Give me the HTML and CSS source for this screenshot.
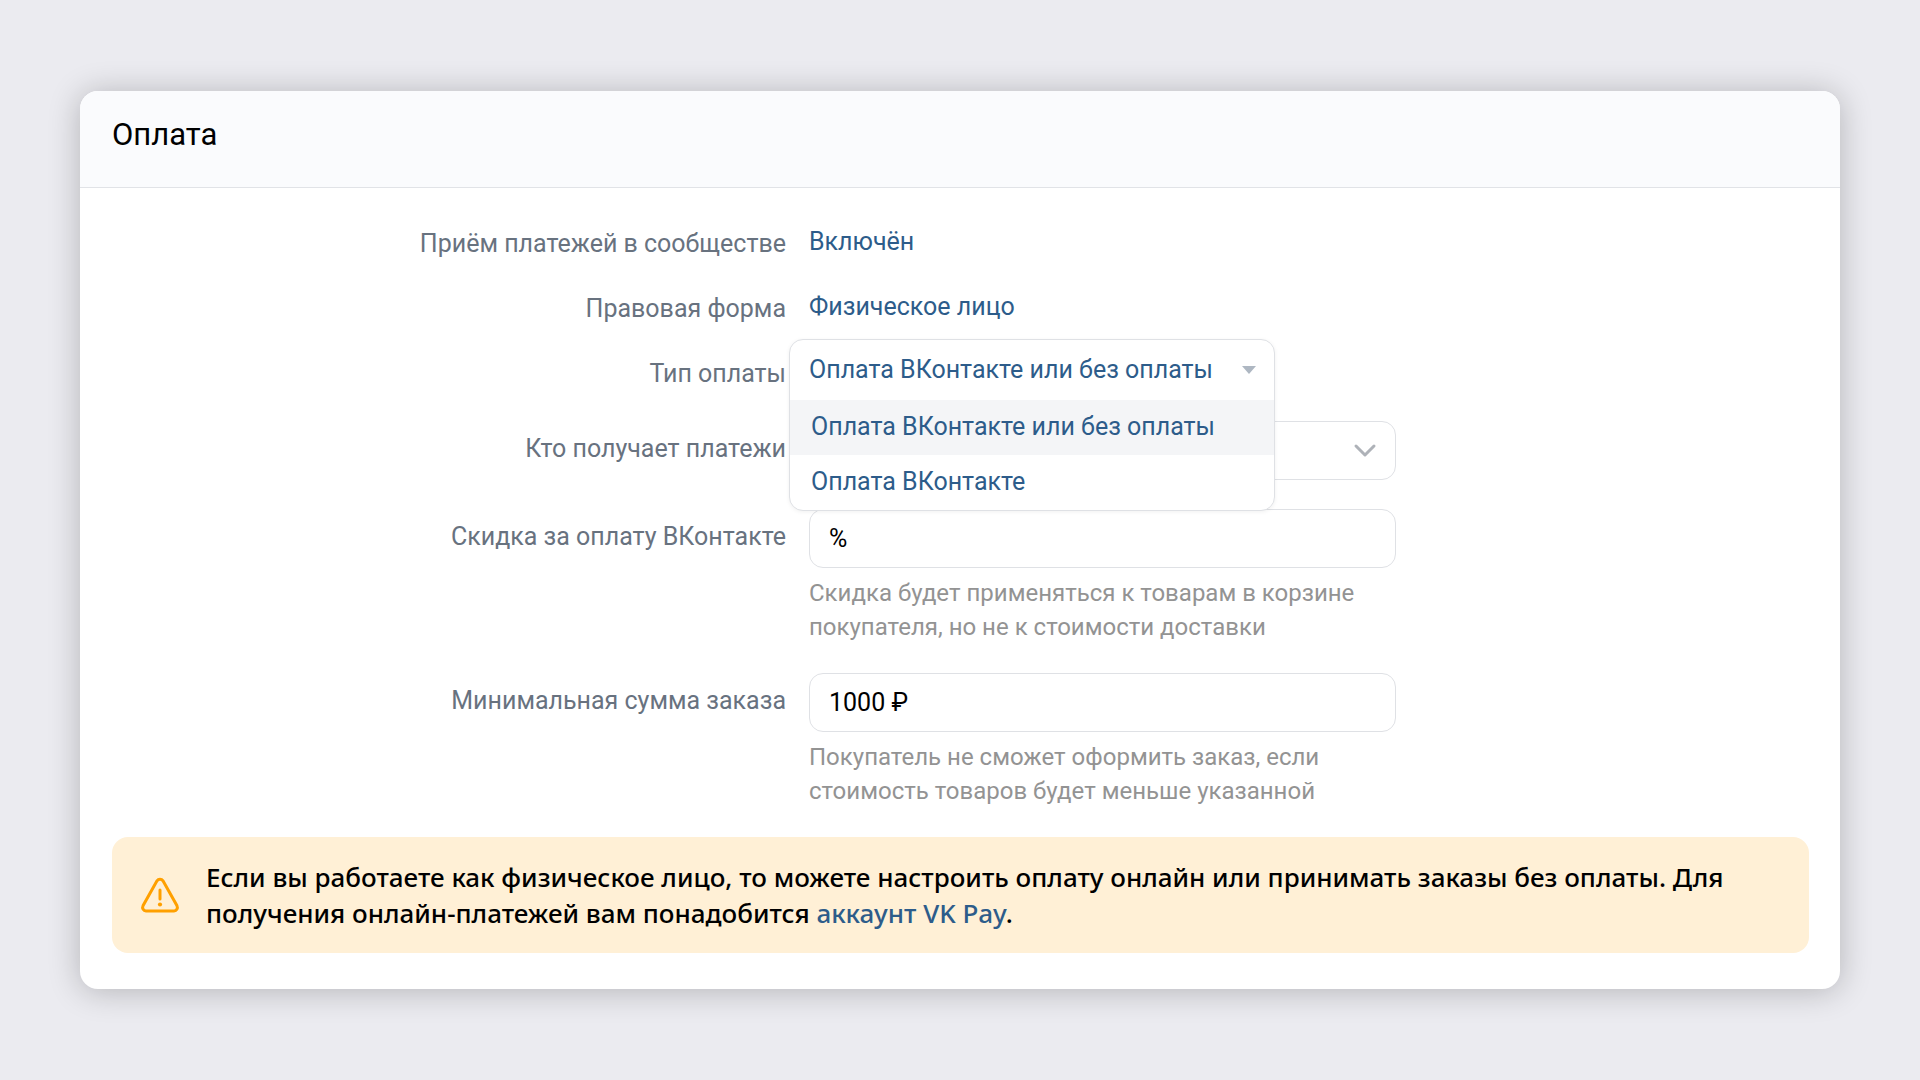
FILE: index.html
```html
<!DOCTYPE html>
<html lang="ru">
<head>
<meta charset="utf-8">
<meta name="viewport" content="width=device-width, initial-scale=1">
<title>Оплата</title>
<link rel="stylesheet" href="styles.css">
</head>
<body>
<main class="card">
  <header class="card-header">
    <h1 class="card-title">Оплата</h1>
  </header>
  <form class="card-body">
    <div class="row">
      <span class="label" id="accept-label">Приём платежей в сообществе</span>
      <div class="control">
        <button class="value" type="button" aria-describedby="accept-label">Включён</button>
      </div>
    </div>
    <div class="row">
      <span class="label" id="legal-label">Правовая форма</span>
      <div class="control">
        <button class="value" type="button" aria-describedby="legal-label">Физическое лицо</button>
      </div>
    </div>
    <div class="row">
      <span class="label" id="type-label">Тип оплаты</span>
      <div class="control">
        <div class="dropdown">
          <button class="dropdown-toggle" type="button" aria-haspopup="listbox" aria-expanded="true" aria-describedby="type-label">
            Оплата ВКонтакте или без оплаты
            <svg class="caret" viewBox="0 0 14 8" aria-hidden="true"><path d="M0 0h14L7 8z"/></svg>
          </button>
          <ul class="dropdown-list" role="listbox" aria-labelledby="type-label">
            <li class="option option-active" role="option" aria-selected="true">Оплата ВКонтакте или без оплаты</li>
            <li class="option" role="option" aria-selected="false">Оплата ВКонтакте</li>
          </ul>
        </div>
      </div>
    </div>
    <div class="row row-field">
      <label class="label" for="recipient">Кто получает платежи</label>
      <div class="control">
        <select class="field" id="recipient"><option></option></select>
        <svg class="chevron" viewBox="0 0 24 16" aria-hidden="true"><path d="M3 3l9 9 9-9"/></svg>
      </div>
    </div>
    <div class="row row-field">
      <label class="label" for="discount">Скидка за оплату ВКонтакте</label>
      <div class="control">
        <input class="field" id="discount" type="text" value="%">
        <p class="hint">Скидка будет применяться к товарам в корзине покупателя, но не к стоимости доставки</p>
      </div>
    </div>
    <div class="row row-field">
      <label class="label" for="minimum">Минимальная сумма заказа</label>
      <div class="control">
        <input class="field" id="minimum" type="text" value="1000 ₽">
        <p class="hint">Покупатель не сможет оформить заказ, если стоимость товаров будет меньше указанной</p>
      </div>
    </div>
    <div class="notice">
      <svg class="notice-icon" viewBox="0 0 40 38" aria-hidden="true">
        <path class="icon-line" d="M17 4.8a3.6 3.6 0 0 1 6 0L37 29.8a3.6 3.6 0 0 1-3 5.2H6a3.6 3.6 0 0 1-3-5.2z"/>
        <path class="icon-line" d="M20 14v9"/>
        <circle class="icon-dot" cx="20" cy="28.5" r="2.1"/>
      </svg>
      <p class="notice-text">Если вы работаете как физическое лицо, то можете настроить оплату онлайн или принимать заказы без оплаты. Для получения онлайн-платежей вам понадобится <a class="notice-link" href="#">аккаунт VK Pay</a>.</p>
    </div>
  </form>
</main>
</body>
</html>
```
FILE: styles.css
```css
* {
  box-sizing: border-box;
}

body {
  margin: 0;
  min-height: 100vh;
  display: flex;
  align-items: center;
  padding: 40px 80px;
  background: #ebebf0;
  color: #000;
  font: 25px/32px Roboto, "Liberation Sans", sans-serif;
}

.card {
  flex: 1;
  min-width: 0;
  background: #fff;
  border-radius: 18px;
  box-shadow: 0 2px 32px rgba(0, 0, 0, 0.24);
}

.card-header {
  padding: 24px 32px 32px;
  background: #fafbfd;
  border-bottom: 1px solid #e1e3e7;
  border-radius: 18px 18px 0 0;
}

.card-title {
  margin: 0;
  font-size: 31px;
  line-height: 40px;
  font-weight: 400;
}

.card-body {
  display: flex;
  flex-direction: column;
  gap: 29px;
  padding: 38px 31px 36px 32px;
}

.row {
  display: grid;
  grid-template-columns: minmax(0, 674px) minmax(0, 587px);
  column-gap: 23px;
  min-height: 36px;
}

.label {
  padding-top: 2px;
  color: #68727f;
  text-align: right;
}

.row-field .label {
  padding-top: 12px;
}

.control {
  position: relative;
}

.value,
.dropdown-toggle {
  display: block;
  padding: 0;
  border: 0;
  background: none;
  color: #2d5c8a;
  font: inherit;
  text-align: left;
  cursor: pointer;
}

.dropdown {
  position: absolute;
  top: -17px;
  left: -20px;
  z-index: 1;
  width: 486px;
  background: #fff;
  border: 1px solid #dfe1e5;
  border-radius: 14px;
  box-shadow: 0 1px 4px rgba(0, 0, 0, 0.06);
}

.dropdown-toggle {
  display: flex;
  align-items: center;
  justify-content: space-between;
  width: 100%;
  height: 60px;
  padding: 0 18px 0 19px;
}

.caret {
  width: 14px;
  height: 8px;
  fill: #aeb7c2;
}

.dropdown-list {
  margin: 0;
  padding: 0;
  list-style: none;
}

.option {
  padding: 11px 21px 12px;
  color: #2d5c8a;
  cursor: pointer;
}

.option-active {
  background: #f4f5f7;
}

.field {
  display: block;
  width: 100%;
  height: 59px;
  padding: 0 19px;
  border: 1px solid #dfe1e5;
  border-radius: 14px;
  background: #fff;
  color: #000;
  font: inherit;
  appearance: none;
}

.chevron {
  position: absolute;
  top: 22px;
  right: 19px;
  width: 24px;
  height: 16px;
  fill: none;
  stroke: #aeb2b8;
  stroke-width: 3;
  stroke-linecap: round;
  stroke-linejoin: round;
  pointer-events: none;
}

.hint {
  margin: 8px 0 0;
  color: #939393;
  font-size: 24px;
  line-height: 34px;
}

.notice {
  display: flex;
  align-items: center;
  gap: 26px;
  padding: 22px 28px;
  background: #fff0d6;
  border-radius: 16px;
}

.notice-icon {
  flex: none;
  width: 40px;
  height: 38px;
}

.icon-line {
  fill: none;
  stroke: #ffa000;
  stroke-width: 3;
  stroke-linecap: round;
}

.icon-dot {
  fill: #ffa000;
}

.notice-text {
  margin: 0;
  font: 500 26px/36px "Noto Sans", "Open Sans", sans-serif;
}

.notice-link {
  color: #2d5c8a;
  text-decoration: none;
}
```
